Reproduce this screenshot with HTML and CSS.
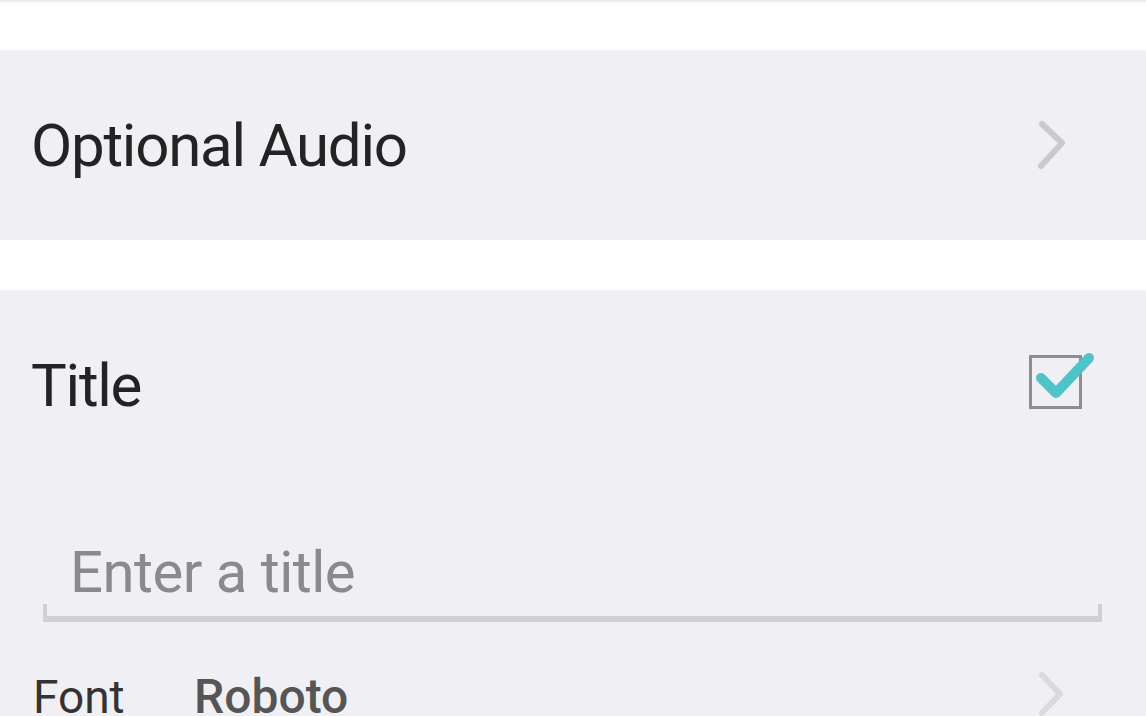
FILE: index.html
```html
<!DOCTYPE html>
<html lang="en">
<head>
<meta charset="utf-8">
<title>Settings</title>
<link rel="stylesheet" href="styles.css">
</head>
<body>
<div class="screen">
  <div class="topbar"></div>
  <section class="group audio-group">
    <div class="row audio-row">
      <span class="label">Optional Audio</span>
      <svg class="chevron" width="34" height="52" viewBox="0 0 34 52" aria-hidden="true">
        <polyline points="8,5 28,24 7,47" fill="none" stroke="#c9c9ce" stroke-width="6" stroke-linecap="round" stroke-linejoin="round"/>
      </svg>
    </div>
  </section>
  <section class="group title-group">
    <div class="row title-row">
      <span class="label">Title</span>
      <svg class="checkbox" width="72" height="70" viewBox="0 0 72 70" aria-hidden="true">
        <rect x="6.5" y="6.5" width="50" height="51" fill="none" stroke="#8d8d90" stroke-width="3"/>
        <polyline points="17,28 32,43 65,8" fill="none" stroke="#4fc4c8" stroke-width="10" stroke-linecap="round" stroke-linejoin="round"/>
      </svg>
    </div>
    <div class="field">
      <span class="placeholder">Enter a title</span>
    </div>
    <div class="row font-row">
      <span class="font-label">Font</span>
      <span class="font-value">Roboto</span>
      <svg class="chevron-small" width="34" height="52" viewBox="0 0 34 52" aria-hidden="true">
        <polyline points="8,5 26,24 8,43" fill="none" stroke="#dadade" stroke-width="6" stroke-linecap="round" stroke-linejoin="round"/>
      </svg>
    </div>
  </section>
</div>
</body>
</html>
```

FILE: styles.css
```css
html, body {
  margin: 0;
  padding: 0;
  background: #ffffff;
  overflow: hidden;
}

.screen {
  width: 1146px;
  height: 716px;
  overflow: hidden;
  font-family: Roboto, "Noto Sans", "Liberation Sans", sans-serif;
  display: flex;
  flex-direction: column;
}

.topbar {
  height: 50px;
  flex: none;
  background: linear-gradient(#e6e6e8 0, #f6f6f7 2px, #ffffff 5px);
}

.group {
  background: #f0eff4;
  flex: none;
}

.audio-group {
  height: 190px;
  margin-bottom: 50px;
  display: flex;
}

.title-group {
  flex: 1;
}

.row {
  display: flex;
  padding-left: 31px;
}

.audio-row {
  flex: 1;
  align-items: center;
  justify-content: space-between;
}

.label {
  font-size: 60px;
  letter-spacing: -1.25px;
  color: #232323;
  line-height: normal;
}

.chevron {
  margin-right: 78px;
}

.title-row {
  height: 190px;
  align-items: center;
  justify-content: space-between;
}

.checkbox {
  margin-right: 50px;
}

.field {
  position: relative;
  margin-left: 43px;
  width: 1059px;
  box-sizing: border-box;
  padding: 58px 0 10px 27px;
  border-bottom: 6px solid #cfcfd4;
}

.field::before,
.field::after {
  content: "";
  position: absolute;
  bottom: -6px;
  width: 4px;
  height: 18px;
  background: #cfcfd4;
}

.field::before { left: 0; }
.field::after { right: 0; }

.placeholder {
  display: block;
  font-size: 58px;
  letter-spacing: -0.5px;
  line-height: normal;
  color: #8a8a8c;
}

.font-row {
  margin-top: 46px;
  padding-left: 33px;
  align-items: baseline;
}

.font-label {
  width: 161px;
  font-size: 46px;
  color: #333333;
}

.font-value {
  flex: 1;
  font-size: 48px;
  font-weight: 500;
  color: #555555;
}

.chevron-small {
  align-self: flex-start;
  margin-top: 2px;
  margin-right: 78px;
}
```
